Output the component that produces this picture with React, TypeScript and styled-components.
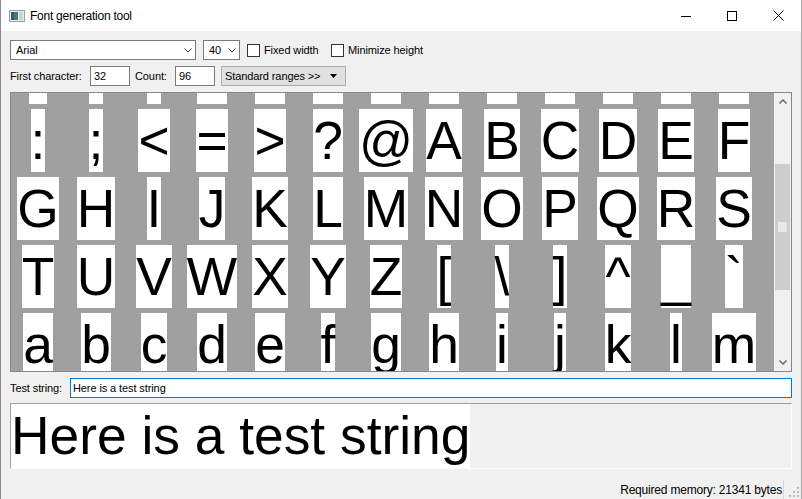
import React, { useLayoutEffect, useRef } from "react";
import styled, { createGlobalStyle } from "styled-components";

const UI_FONT = `"Liberation Sans", Arial, sans-serif`;

const GlobalStyle = createGlobalStyle`
  html, body { margin: 0; padding: 0; background: #f0f0f0; }
  body { width: 802px; height: 499px; overflow: hidden; }
  #root { width: 802px; height: 499px; }
`;

const Window = styled.div`
  width: 802px;
  height: 499px;
  box-sizing: border-box;
  display: flex;
  flex-direction: column;
  background: #f0f0f0;
  border-left: 1px solid #8c8c8c;
  border-right: 1px solid #a8a8a8;
  font-family: ${UI_FONT};
  color: #000;
  overflow: hidden;
`;

const TitleBar = styled.div`
  height: 31px;
  flex: none;
  background: #fff;
  display: flex;
  align-items: center;
`;

const AppIcon = styled.svg`
  margin-left: 8px;
  flex: none;
`;

const Title = styled.span`
  flex: 1;
  margin-left: 5px;
  font-size: 12px;
  letter-spacing: -0.25px;
`;

const CaptionButton = styled.div`
  width: 46px;
  height: 31px;
  flex: none;
  display: flex;
  align-items: center;
  justify-content: center;
`;

const Body = styled.div`
  flex: 1;
  min-height: 0;
  display: flex;
  flex-direction: column;
  padding: 9px 9px 0 9px;
  font-size: 11px;
  letter-spacing: -0.1px;
`;

const Row = styled.div<{ $mb: number }>`
  height: 20px;
  flex: none;
  display: flex;
  align-items: center;
  margin-bottom: ${(p) => p.$mb}px;
`;

const Combo = styled.div<{ $w: number; $mr: number }>`
  width: ${(p) => p.$w}px;
  height: 20px;
  box-sizing: border-box;
  margin-right: ${(p) => p.$mr}px;
  border: 1px solid #7a7a7a;
  background: #fff;
  display: flex;
  align-items: center;
  padding: 0 3px 0 5px;
  flex: none;
`;

const ComboText = styled.span`
  flex: 1;
`;

const CheckControl = styled.label<{ $w?: number }>`
  display: flex;
  align-items: center;
  flex: none;
  width: ${(p) => (p.$w ? `${p.$w}px` : "auto")};
  gap: 4px;
`;

const CheckBox = styled.span`
  width: 13px;
  height: 13px;
  box-sizing: border-box;
  border: 1px solid #333;
  background: #fff;
  flex: none;
  margin-top: 1px;
`;

const Label = styled.span<{ $w: number; $pl?: number }>`
  width: ${(p) => p.$w}px;
  padding-left: ${(p) => p.$pl ?? 0}px;
  box-sizing: border-box;
  flex: none;
  white-space: nowrap;
`;

const TextInput = styled.div<{ $w?: number; $focused?: boolean }>`
  width: ${(p) => (p.$w ? `${p.$w}px` : "auto")};
  flex: ${(p) => (p.$w ? "none" : "1")};
  height: 20px;
  box-sizing: border-box;
  border: 1px solid ${(p) => (p.$focused ? "#0078d7" : "#7a7a7a")};
  background: #fff;
  display: flex;
  align-items: center;
  padding-left: ${(p) => (p.$focused ? 2 : 3)}px;
`;

const DropButton = styled.div`
  width: 125px;
  height: 20px;
  box-sizing: border-box;
  margin-left: 6px;
  border: 1px solid #adadad;
  background: #e1e1e1;
  display: flex;
  align-items: center;
  padding: 0 8px 0 3px;
  flex: none;
`;

const ButtonText = styled.span`
  flex: 1;
`;

const CharView = styled.div`
  height: 280px;
  flex: none;
  box-sizing: border-box;
  border: 1px solid #828790;
  background: #a0a0a0;
  display: flex;
  margin-bottom: 6px;
`;

const Viewport = styled.div`
  flex: 1;
  overflow: hidden;
`;

const CharGrid = styled.div`
  display: grid;
  grid-template-columns: repeat(13, 54px);
  grid-auto-rows: 63px;
  column-gap: 4px;
  row-gap: 5px;
  justify-items: center;
`;

const Glyph = styled.span`
  display: block;
  height: 63px;
  background: #fff;
  color: #000;
  font-family: ${UI_FONT};
  font-size: 40pt;
  line-height: 63px;
  letter-spacing: 0;
  white-space: pre;
`;

const ScrollBar = styled.div`
  width: 17px;
  flex: none;
  background: #f0f0f0;
  display: flex;
  flex-direction: column;
`;

const ScrollArrow = styled.div`
  height: 17px;
  flex: none;
  display: flex;
  align-items: center;
  justify-content: center;
`;

const ScrollTrack = styled.div`
  flex: 1;
  position: relative;
`;

const ScrollThumb = styled.div`
  position: absolute;
  left: 1px;
  right: 1px;
  background: #cdcdcd;
  display: flex;
  align-items: center;
  justify-content: center;
`;

const ThumbGrip = styled.div`
  width: 9px;
  height: 10px;
  background: #e8e8e8;
`;

const Preview = styled.div`
  height: 66px;
  flex: none;
  box-sizing: border-box;
  border-top: 1px solid #a0a0a0;
  border-left: 1px solid #a0a0a0;
  border-bottom: 1px solid #fff;
  border-right: 1px solid #fff;
  display: flex;
  align-items: flex-start;
  margin-top: 5px;
`;

const PreviewText = styled.span`
  background: #fff;
  font-size: 40pt;
  line-height: 64px;
  height: 64px;
  letter-spacing: 0;
  white-space: pre;
`;

const StatusBar = styled.div`
  flex: 1;
  display: flex;
  justify-content: flex-end;
  align-items: flex-end;
  margin-right: -9px;
`;

const StatusText = styled.span`
  height: 19px;
  display: flex;
  align-items: center;
  font-size: 12px;
  letter-spacing: -0.2px;
  padding-right: 1px;
`;

const StatusSeparator = styled.span`
  width: 1px;
  height: 19px;
  background: #d7d7d7;
  flex: none;
`;

const SizeGrip = styled.svg`
  flex: none;
  margin: 0 1px 1px 4px;
`;

const FIRST = 32;
const COUNT = 96;
const COLS = 13;
const ROW_H = 63;
const ROW_GAP = 5;
const SCROLL_TOP = 120;
const VIEW_H = 278;
const TRACK_H = 244;

const Chevron = ({ up }: { up?: boolean }) => (
  <svg width="8" height="5" viewBox="0 0 8 5">
    <path
      d={up ? "M0.5 4.5 L4 1 L7.5 4.5" : "M0.5 0.5 L4 4 L7.5 0.5"}
      fill="none"
      stroke="#606060"
      strokeWidth="1.4"
    />
  </svg>
);

const ComboChevron = () => (
  <svg width="8" height="5" viewBox="0 0 8 5">
    <path d="M0.5 0.5 L4 4 L7.5 0.5" fill="none" stroke="#3c3c3c" strokeWidth="1" />
  </svg>
);

export default function App() {
  const viewRef = useRef<HTMLDivElement>(null);
  useLayoutEffect(() => {
    if (viewRef.current) viewRef.current.scrollTop = SCROLL_TOP;
  }, []);

  const chars = Array.from({ length: COUNT }, (_, i) =>
    String.fromCharCode(FIRST + i === 127 ? 32 : FIRST + i)
  );
  const rows = Math.ceil(COUNT / COLS);
  const contentH = rows * ROW_H + (rows - 1) * ROW_GAP;
  const thumbH = Math.round((TRACK_H * VIEW_H) / contentH);
  const thumbTop = Math.round((SCROLL_TOP / (contentH - VIEW_H)) * (TRACK_H - thumbH));

  return (
    <>
      <GlobalStyle />
      <Window>
        <TitleBar>
          <AppIcon width="16" height="16" viewBox="0 0 16 16">
            <rect x="0.5" y="2.5" width="15" height="11" fill="#e9ecee" stroke="#9aa0a6" />
            <rect x="2" y="4" width="7" height="8" fill="#3f7f73" />
            <rect x="2" y="4" width="3" height="8" fill="#2d5f6e" />
            <rect x="10" y="4" width="4" height="8" fill="#c9d3d8" />
          </AppIcon>
          <Title>Font generation tool</Title>
          <CaptionButton>
            <svg width="10" height="10" viewBox="0 0 10 10">
              <line x1="0" y1="5.5" x2="10" y2="5.5" stroke="#000" strokeWidth="1" />
            </svg>
          </CaptionButton>
          <CaptionButton>
            <svg width="10" height="10" viewBox="0 0 10 10">
              <rect x="0.5" y="0.5" width="9" height="9" fill="none" stroke="#000" strokeWidth="1" />
            </svg>
          </CaptionButton>
          <CaptionButton>
            <svg width="11" height="11" viewBox="0 0 11 11">
              <path d="M0.5 0.5 L10.5 10.5 M10.5 0.5 L0.5 10.5" stroke="#000" strokeWidth="1" />
            </svg>
          </CaptionButton>
        </TitleBar>

        <Body>
          <Row $mb={6}>
            <Combo $w={186} $mr={7}>
              <ComboText>Arial</ComboText>
              <ComboChevron />
            </Combo>
            <Combo $w={37} $mr={7}>
              <ComboText>40</ComboText>
              <ComboChevron />
            </Combo>
            <CheckControl $w={84}>
              <CheckBox />
              Fixed width
            </CheckControl>
            <CheckControl>
              <CheckBox />
              Minimize height
            </CheckControl>
          </Row>

          <Row $mb={6}>
            <Label $w={80}>First character:</Label>
            <TextInput $w={40}>32</TextInput>
            <Label $w={45} $pl={5}>Count:</Label>
            <TextInput $w={40}>96</TextInput>
            <DropButton>
              <ButtonText>Standard ranges &gt;&gt;</ButtonText>
              <svg width="7" height="4" viewBox="0 0 7 4">
                <path d="M0 0 H7 L3.5 4 Z" fill="#000" />
              </svg>
            </DropButton>
          </Row>

          <CharView>
            <Viewport ref={viewRef}>
              <CharGrid>
                {chars.map((c, i) => (
                  <Glyph key={i}>{c}</Glyph>
                ))}
              </CharGrid>
            </Viewport>
            <ScrollBar>
              <ScrollArrow>
                <Chevron up />
              </ScrollArrow>
              <ScrollTrack>
                <ScrollThumb style={{ top: thumbTop, height: thumbH }}>
                  <ThumbGrip />
                </ScrollThumb>
              </ScrollTrack>
              <ScrollArrow>
                <Chevron />
              </ScrollArrow>
            </ScrollBar>
          </CharView>

          <Row $mb={0}>
            <Label $w={60}>Test string:</Label>
            <TextInput $focused>Here is a test string</TextInput>
          </Row>

          <Preview>
            <PreviewText>Here is a test string</PreviewText>
          </Preview>

          <StatusBar>
            <StatusText>Required memory: 21341 bytes</StatusText>
            <StatusSeparator />
            <SizeGrip width="12" height="12" viewBox="0 0 12 12">
              {[
                [9, 1],
                [9, 5],
                [5, 5],
                [9, 9],
                [5, 9],
                [1, 9],
              ].map(([x, y], i) => (
                <rect key={i} x={x} y={y} width="2" height="2" fill="#bcbcbc" />
              ))}
            </SizeGrip>
          </StatusBar>
        </Body>
      </Window>
    </>
  );
}
